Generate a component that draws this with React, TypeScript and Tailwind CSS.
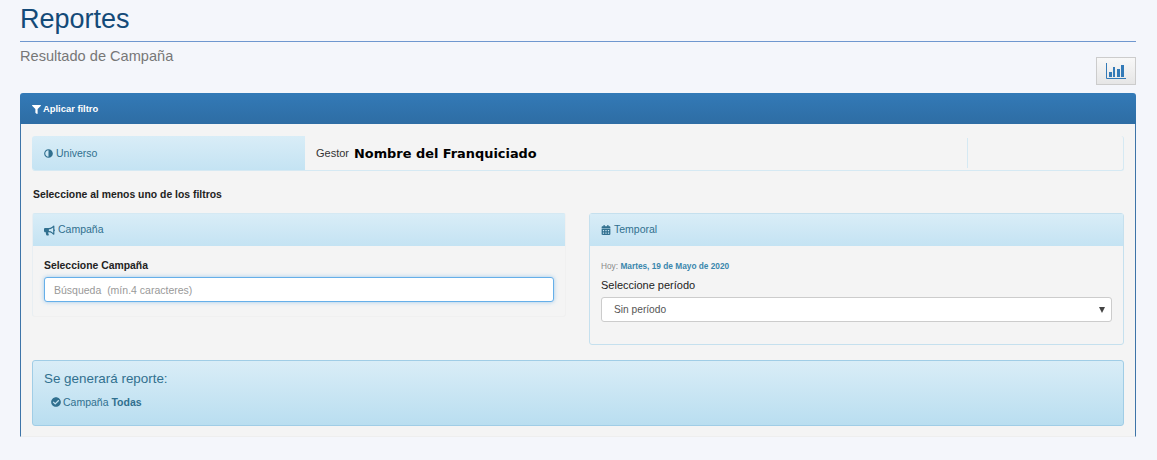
import { FaAdjust, FaBullhorn, FaCalendarAlt, FaCheckCircle, FaFilter } from 'react-icons/fa';

const ChartIcon = () => (
  <svg width="20" height="16" viewBox="0 0 20 16" className="text-[#337ab7]">
    <path d="M0.5 0V15.5H20" fill="none" stroke="currentColor" strokeWidth="1" />
    <rect x="3" y="9" width="3" height="5" fill="currentColor" />
    <rect x="7" y="4" width="2" height="10" fill="currentColor" />
    <rect x="11" y="6" width="3" height="8" fill="currentColor" />
    <rect x="15" y="2" width="3" height="12" fill="currentColor" />
  </svg>
);

const SubPanel = ({
  icon,
  title,
  className,
  children,
}: {
  icon: React.ReactNode;
  title: string;
  className: string;
  children: React.ReactNode;
}) => (
  <div className={`rounded-[3px] border ${className}`}>
    <div className="flex h-[32px] items-center gap-[3px] bg-gradient-to-b from-[#d9edf7] to-[#c4e3f3] px-[11px] text-[10.5px] text-[#31708f]">
      {icon}
      {title}
    </div>
    {children}
  </div>
);

export default function App() {
  return (
    <div className="h-[460px] overflow-hidden bg-[#f4f6fb] pr-[21px] pl-5 font-['Liberation_Sans',Arial,sans-serif] text-[12px] text-[#333]">
      <h1 className="h-[41px] pt-[3px] text-[27px] leading-[32px] text-[#134a78]">Reportes</h1>
      <div className="border-t border-[#6f97cf]" />
      <div className="flex h-[51px] items-start justify-between">
        <p className="pt-[6px] text-[14.6px] leading-[17px] text-[#777]">Resultado de Campaña</p>
        <button className="mt-[15px] flex h-[28px] w-[40px] items-center justify-center border border-[#ccc] bg-gradient-to-b from-[#f8f8f8] to-[#e6e6e6]">
          <ChartIcon />
        </button>
      </div>

      <div className="h-[344px] overflow-hidden rounded-t-[3px]">
        <div className="flex h-[31px] items-center gap-[2px] bg-gradient-to-b from-[#337ab7] to-[#2e6da4] px-3 pt-px text-[9.4px] font-bold text-white">
          <FaFilter className="h-[9px] w-[9px]" />
          Aplicar filtro
        </div>
        <div className="h-[313px] border-x border-b border-x-[#3d74a8] border-b-[#eeeeee] bg-[#f4f4f4] px-[11px] pt-[12px]">
          <div className="flex h-[35px] rounded-[3px] border-r border-b border-[#d5e9f3]">
            <div className="flex w-[273px] items-center gap-[3px] rounded-l-[3px] bg-gradient-to-b from-[#d9edf7] to-[#c4e3f3] pt-px pl-3 text-[10.5px] text-[#31708f]">
              <FaAdjust className="h-[9px] w-[9px] -scale-x-100" />
              Universo
            </div>
            <div className="flex flex-1 items-center pl-[11px] text-[11px]">
              Gestor
              <span className="mt-px ml-[5px] font-['DejaVu_Sans',Verdana,sans-serif] text-[12.9px] font-bold text-black">
                Nombre del Franquiciado
              </span>
            </div>
            <div className="my-[2px] w-[156px] border-l border-[#d5e9f3]" />
          </div>

          <p className="mt-[17px] h-[25px] pl-px text-[10.4px] font-bold leading-[13px] text-[#222]">
            Seleccione al menos uno de los filtros
          </p>

          <div className="flex h-[132px] items-start gap-[23px]">
            <SubPanel
              icon={<FaBullhorn className="h-[11px] w-[11px]" />}
              title="Campaña"
              className="h-[104px] w-[534px] border-[#f0f0f0] border-t-[#d5e9f3] border-l-[#e8eef2]"
            >
              <div className="px-[11px] pt-[13px]">
                <label className="block text-[10.4px] font-bold leading-[14px] text-[#222]">Seleccione Campaña</label>
                <input
                  readOnly
                  placeholder="Búsqueda  (mín.4 caracteres)"
                  className="mt-[4px] h-[25px] w-full rounded-[3px] border border-[#66afe9] bg-white px-[9px] text-[10.5px] shadow-[0_0_4px_rgba(102,175,233,0.6)] outline-none placeholder:text-[#999]"
                />
              </div>
            </SubPanel>
            <SubPanel
              icon={<FaCalendarAlt className="h-[10px] w-[10px]" />}
              title="Temporal"
              className="h-[132px] flex-1 border-[#c5e0ee]"
            >
              <div className="px-[11px] pt-[15px]">
                <p className="text-[8.3px] leading-[10px] text-[#888]">
                  Hoy: <span className="font-bold text-[#3a87ad]">Martes, 19 de Mayo de 2020</span>
                </p>
                <label className="mt-[7px] block text-[11px] leading-[14px] text-[#222]">Seleccione período</label>
                <div className="mt-[5px] flex h-[25px] items-center justify-between rounded-[3px] border border-[#ccc] bg-white pr-[6px] pl-[12px] text-[10.2px] text-[#555]">
                  Sin período
                  <span className="h-0 w-0 border-x-[3px] border-t-[6px] border-x-transparent border-t-[#444]" />
                </div>
              </div>
            </SubPanel>
          </div>

          <div className="mt-[15px] h-[66px] rounded-[3px] border border-[#a0cde6] bg-gradient-to-b from-[#d9edf7] to-[#b9def0] px-[11px] pt-[8px] text-[#31708f]">
            <p className="text-[13.4px] leading-[20px]">Se generará reporte:</p>
            <div className="mt-[6px] flex items-center gap-[2px] pl-[7px] text-[10.5px] leading-[14px]">
              <FaCheckCircle className="h-[10px] w-[10px]" />
              <span>
                Campaña <span className="font-bold">Todas</span>
              </span>
            </div>
          </div>
        </div>
      </div>
    </div>
  );
}
